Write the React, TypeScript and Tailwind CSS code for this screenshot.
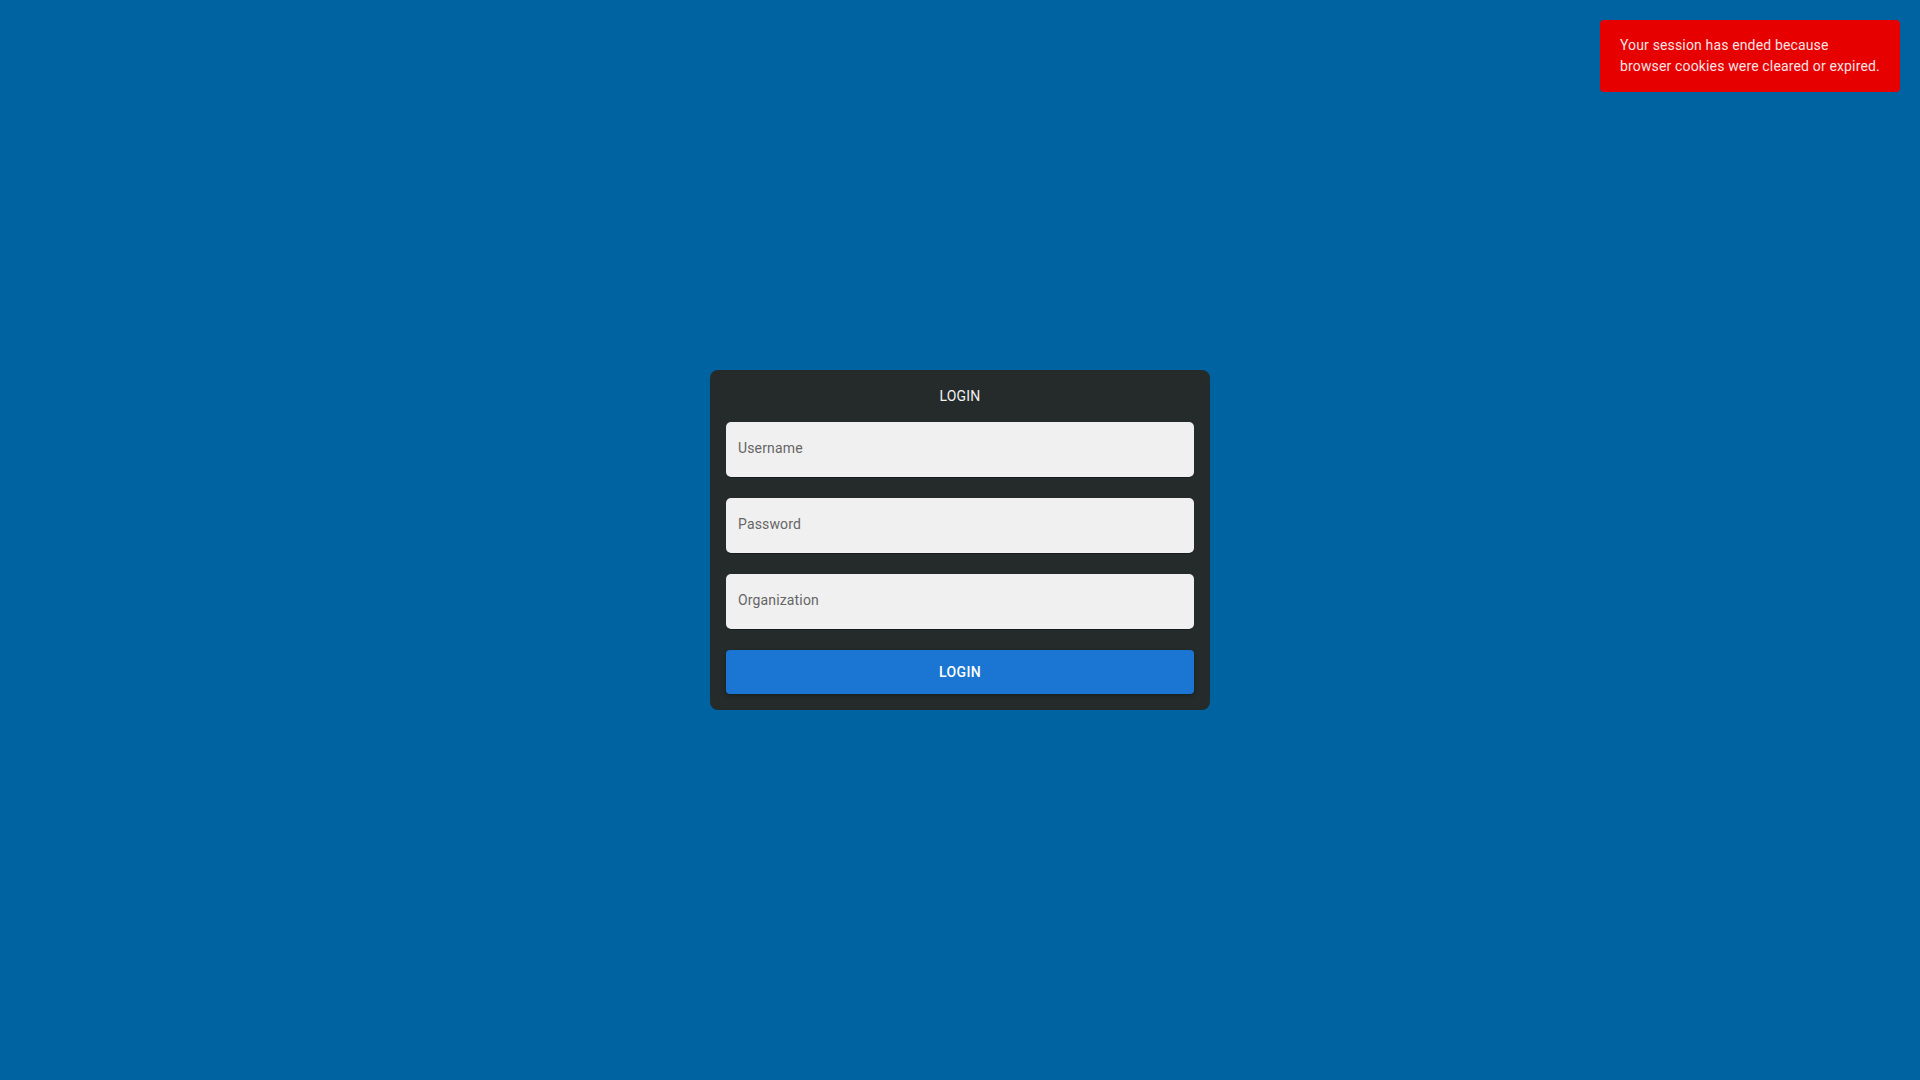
import React from "react";

export default function App() {
  const fields = ["Username", "Password", "Organization"];
  return (
    <div
      className="relative w-full h-screen bg-[#0063a1] flex items-center justify-center"
      style={{ fontFamily: "Roboto, 'Liberation Sans', sans-serif" }}
    >
      <div className="w-[500px] bg-[#252b2b] rounded-[8px] px-4 pt-4 pb-4 flex flex-col">
        <div className="text-center text-[14px] leading-[20px] text-[#f2f2f2] tracking-[0.15px]">LOGIN</div>
        <div className="mt-4 flex flex-col gap-[21px]">
          {fields.map((f) => (
            <input
              key={f}
              type={f === "Password" ? "password" : "text"}
              placeholder={f}
              className="h-[55px] w-full rounded-[5px] bg-[#f0f0f0] px-3 pb-[3px] text-[14px] tracking-[0.15px] text-[#333] placeholder:text-[#666] outline-none shadow-[0_1px_0_rgba(0,0,0,0.35)]"
            />
          ))}
          <button className="h-[44px] w-full rounded-[4px] bg-[#1a76d2] text-white text-[14px] font-medium tracking-[0.4px] shadow-[0_2px_4px_rgba(0,0,0,0.3)]">
            LOGIN
          </button>
        </div>
      </div>

      <div className="absolute top-[20px] right-[20px] w-[300px] rounded-[4px] bg-[#e60000] pl-5 pr-3 pt-[15px] pb-[15px] text-[14px] leading-[21px] tracking-[0.15px] text-[#fbe3e3]">
        Your session has ended because
        <br />
        browser cookies were cleared or expired.
      </div>
    </div>
  );
}
